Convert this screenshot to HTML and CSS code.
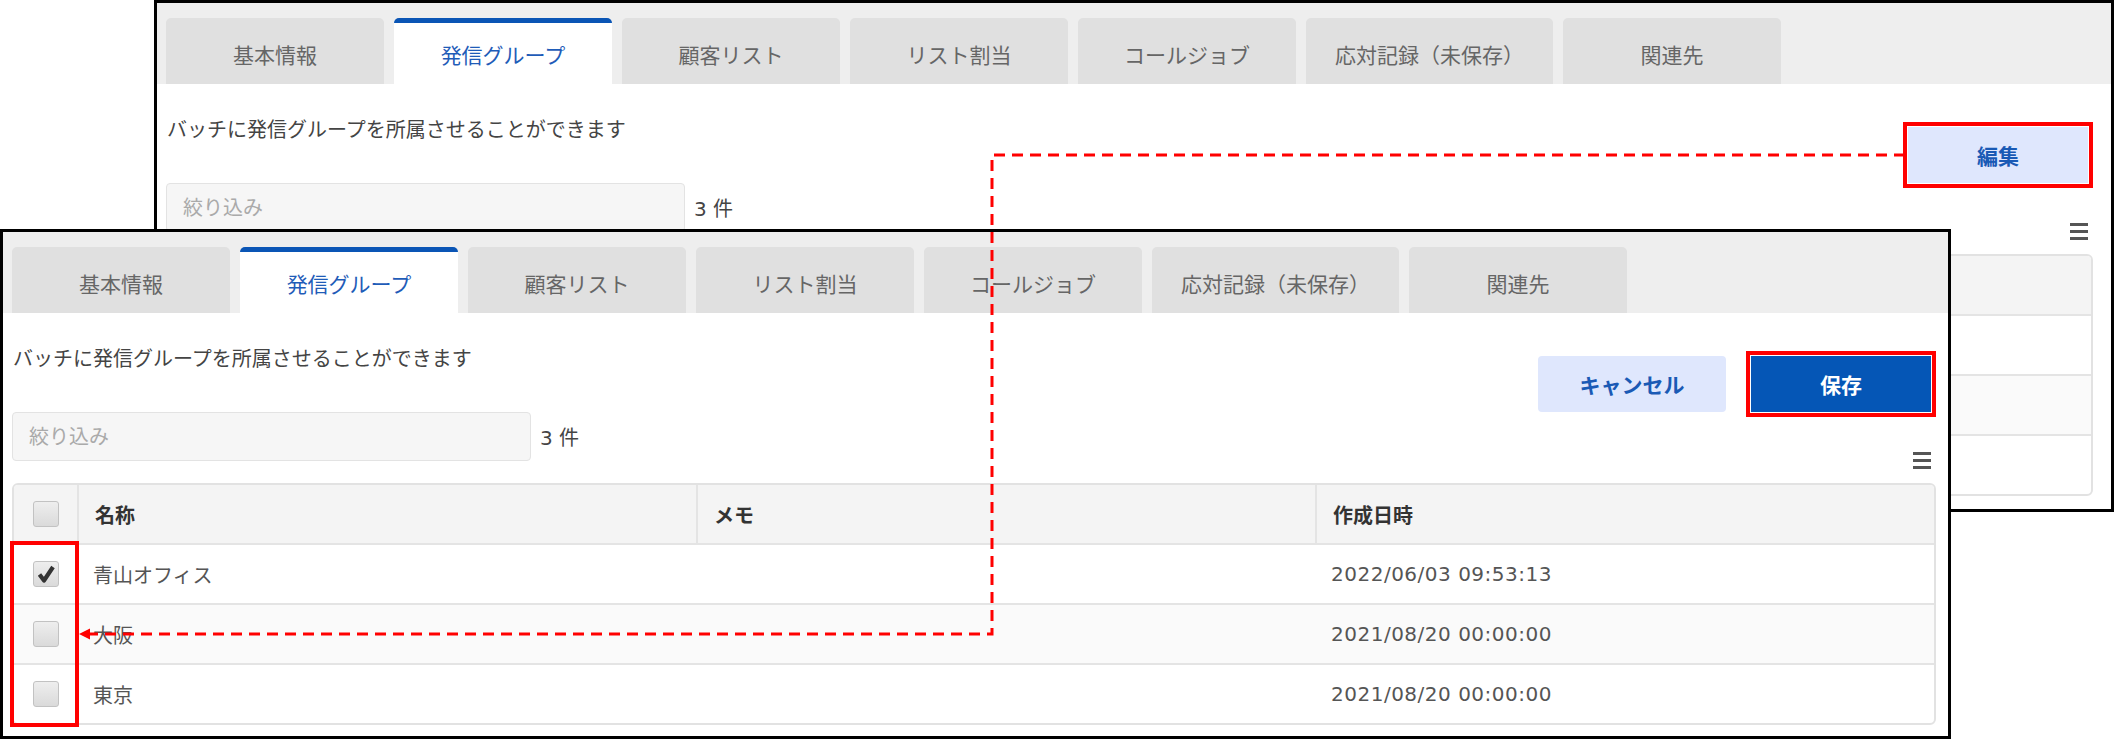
FILE: index.html
```html
<!DOCTYPE html>
<html lang="ja">
  <head>
    <meta charset="utf-8">
    <title>発信グループ</title>
    <link rel="stylesheet" href="styles.css">
  </head>
  <body>
    <div class="stage">

      <!-- 閲覧モード（奥の画面）: 一覧は手前の画面に隠れる -->
      <div class="panel panel-back">
        <div class="tabs">
          <div class="tab">基本情報</div>
          <div class="tab active">発信グループ</div>
          <div class="tab">顧客リスト</div>
          <div class="tab">リスト割当</div>
          <div class="tab">コールジョブ</div>
          <div class="tab">応対記録（未保存）</div>
          <div class="tab">関連先</div>
        </div>
        <div class="content">
          <div class="head">
            <div class="head-left">
              <p class="desc">バッチに発信グループを所属させることができます</p>
              <div class="filter-row">
                <input class="filter" type="text" placeholder="絞り込み">
                <span class="count">3 件</span>
              </div>
            </div>
            <div class="head-right">
              <div class="actions">
                <button class="btn btn-light mark">編集</button>
              </div>
              <svg class="menu" width="18" height="18" viewBox="0 0 18 18">
                <rect x="0" y="1" width="18" height="3"/>
                <rect x="0" y="8" width="18" height="3"/>
                <rect x="0" y="15" width="18" height="3"/>
              </svg>
            </div>
          </div>
          <table class="grid">
            <thead>
              <tr><th></th><th></th><th></th></tr>
            </thead>
            <tbody>
              <tr><td></td><td></td><td></td></tr>
              <tr><td></td><td></td><td></td></tr>
              <tr><td></td><td></td><td></td></tr>
            </tbody>
          </table>
        </div>
      </div>

      <!-- 編集モード（手前の画面） -->
      <div class="panel panel-front">
        <div class="tabs">
          <div class="tab">基本情報</div>
          <div class="tab active">発信グループ</div>
          <div class="tab">顧客リスト</div>
          <div class="tab">リスト割当</div>
          <div class="tab">コールジョブ</div>
          <div class="tab">応対記録（未保存）</div>
          <div class="tab">関連先</div>
        </div>
        <div class="content">
          <div class="head">
            <div class="head-left">
              <p class="desc">バッチに発信グループを所属させることができます</p>
              <div class="filter-row">
                <input class="filter" type="text" placeholder="絞り込み">
                <span class="count">3 件</span>
              </div>
            </div>
            <div class="head-right">
              <div class="actions">
                <button class="btn btn-light btn-cancel">キャンセル</button>
                <button class="btn btn-primary mark">保存</button>
              </div>
              <svg class="menu" width="18" height="18" viewBox="0 0 18 18">
                <rect x="0" y="1" width="18" height="3"/>
                <rect x="0" y="8" width="18" height="3"/>
                <rect x="0" y="15" width="18" height="3"/>
              </svg>
            </div>
          </div>
          <table class="grid">
            <colgroup>
              <col class="col-check">
              <col><col><col>
            </colgroup>
            <thead>
              <tr>
                <th class="c-check"><span class="cb"></span></th>
                <th>名称</th><th>メモ</th><th>作成日時</th>
              </tr>
            </thead>
            <tbody>
              <tr>
                <td class="c-check">
                  <span class="cb">
                    <svg width="24" height="24" viewBox="0 0 24 24"><path d="M5.5 12.5 L10 18.5 L19 5" fill="none" stroke="#333" stroke-width="4.2" stroke-linejoin="round"/></svg>
                  </span>
                </td>
                <td>青山オフィス</td><td></td><td class="date">2022/06/03 09:53:13</td>
              </tr>
              <tr>
                <td class="c-check"><span class="cb"></span></td>
                <td>大阪</td><td></td><td class="date">2021/08/20 00:00:00</td>
              </tr>
              <tr>
                <td class="c-check"><span class="cb"></span></td>
                <td>東京</td><td></td><td class="date">2021/08/20 00:00:00</td>
              </tr>
            </tbody>
          </table>
        </div>
      </div>

      <!-- 説明用の赤い線 -->
      <svg class="notes" width="2115" height="739" viewBox="0 0 2115 739">
        <path d="M1905 155 H992 V634 H88" fill="none" stroke="#ff0000" stroke-width="3" stroke-dasharray="11 7"/>
        <polygon points="79,634 90,628.5 90,639.5" fill="#ff0000"/>
        <rect x="12" y="543" width="65" height="182" fill="none" stroke="#ff0000" stroke-width="4"/>
      </svg>
    </div>
  </body>
</html>
```

FILE: styles.css
```css
/* Two screens of the batch editor, stacked like a manual illustration */
body {
  margin: 0;
  background-color: #fff;
  font-family: "DejaVu Sans", "Noto Sans CJK JP", sans-serif;
}

.stage {
  position: relative;
  width: 2115px;
  height: 739px;
  overflow: hidden;
}

.panel {
  position: absolute;
  box-sizing: border-box;
  border: 3px solid #000;
  background-color: #fff;
}

.panel-back {
  left: 154px;
  top: 0;
  width: 1960px;
  height: 512px;
}

.panel-front {
  left: 0;
  top: 229px;
  width: 1951px;
  height: 510px;
}

/* tabs */
.tabs {
  display: flex;
  gap: 10px;
  height: 81px;
  box-sizing: border-box;
  padding: 15px 0 0 9px;
  background-color: #eeeeee;
}

.tab {
  min-width: 218px;
  height: 66px;
  box-sizing: border-box;
  padding: 0 29px;
  border-top: 5px solid #e0e0e0;
  border-radius: 5px 5px 0 0;
  background-color: #e0e0e0;
  display: flex;
  align-items: center;
  justify-content: center;
  font-size: 21px;
  color: #666;
}

.tab.active {
  background-color: #fff;
  border-top-color: #0a55b5;
  color: #1f5cb8;
}

/* body of the tab */
.content {
  padding: 0 12px 0 9px;
}

.panel-back .content {
  padding-right: 18px;
}

.head {
  display: flex;
  justify-content: space-between;
}

.desc {
  margin: 31px 0 0 1px;
  font-size: 20px;
  line-height: 30px;
  color: #444;
}

.filter-row {
  display: flex;
  align-items: center;
  gap: 9px;
  margin-top: 38px;
}

.filter {
  width: 519px;
  height: 49px;
  box-sizing: border-box;
  padding: 0 16px;
  border: 1px solid #e3e3e3;
  border-radius: 4px;
  background-color: #f6f6f6;
  font-family: inherit;
  font-size: 20px;
  color: #444;
}

.filter::placeholder {
  color: #aaa;
}

.count {
  font-size: 20px;
  color: #444;
}

.head-right {
  display: flex;
  flex-direction: column;
  align-items: flex-end;
  margin-right: 5px;
}

.actions {
  display: flex;
  gap: 25px;
  margin-top: 43px;
}

.btn {
  width: 180px;
  height: 56px;
  border: none;
  border-radius: 4px;
  font-family: inherit;
  font-size: 21px;
  font-weight: bold;
  cursor: pointer;
}

.btn-light {
  background-color: #dfe7fd;
  color: #1a5ab5;
}

.btn-cancel {
  width: 188px;
}

.btn-primary {
  background-color: #0556b6;
  color: #fff;
}

.mark { /* red highlight used by the manual */
  border-radius: 0;
  outline: 4px solid #ff0000;
  outline-offset: 1px;
}

.menu {
  margin-top: 39px;
  fill: #555;
}

/* list */
.grid {
  width: 100%;
  margin-top: 14px;
  table-layout: fixed;
  border-collapse: separate;
  border-spacing: 0;
  border: 2px solid #e2e2e2;
  border-radius: 6px;
  overflow: hidden;
  font-size: 20px;
}

.col-check {
  width: 63px;
}

.grid th,
.grid td {
  height: 58px;
  padding: 0 16px;
  border-bottom: 2px solid #e4e4e4;
  text-align: left;
  white-space: nowrap;
}

.grid th {
  background-color: #f4f4f4;
  font-weight: bold;
  color: #333;
}

.grid th + th {
  border-left: 2px solid #e4e4e4;
}

.grid td {
  color: #555;
}

.grid td.date {
  letter-spacing: 0.5px;
}

.grid tbody tr:nth-child(2) td {
  background-color: #fafafa;
}

.grid tbody tr:last-child td {
  border-bottom: none;
}

.grid .c-check {
  padding: 0;
  text-align: center;
}

.cb {
  display: inline-flex;
  align-items: center;
  justify-content: center;
  width: 26px;
  height: 26px;
  box-sizing: border-box;
  border: 1px solid #c2c2c2;
  border-radius: 3px;
  background: linear-gradient(#eeeeee, #dadada);
  vertical-align: middle;
}

.notes {
  position: absolute;
  left: 0;
  top: 0;
  pointer-events: none;
}
```
